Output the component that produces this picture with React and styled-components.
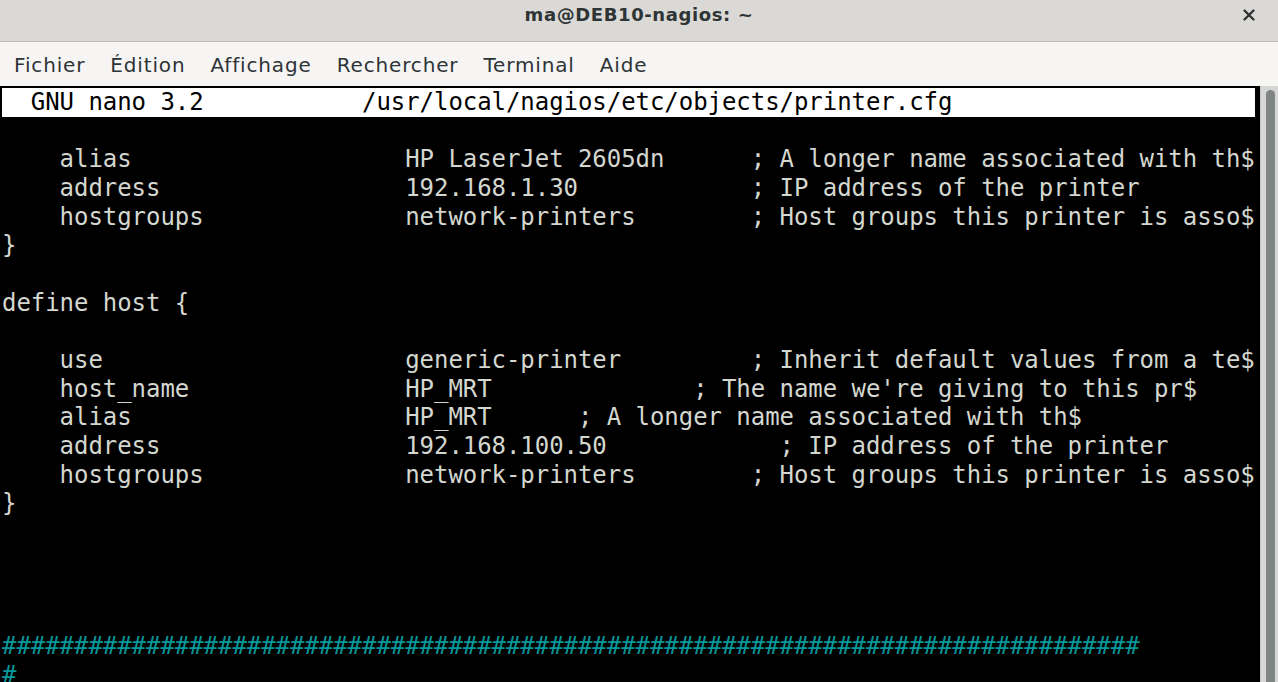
import React from 'react';
import styled, { createGlobalStyle } from 'styled-components';

const GlobalStyle = createGlobalStyle`
  html, body {
    margin: 0;
    padding: 0;
    overflow: hidden;
    background: #000;
  }
`;

const Window = styled.div`
  display: flex;
  flex-direction: column;
  width: 1278px;
  height: 682px;
  overflow: hidden;
`;

const TitleBar = styled.div`
  display: flex;
  align-items: center;
  justify-content: center;
  height: 29px;
  background: #dbd9d5;
  border-bottom: 1px solid #bdbab5;
  padding: 0 18px 12px 0;
  box-sizing: content-box;
`;

const Title = styled.div`
  flex: 1;
  text-align: center;
  padding-left: 40px;
  font-family: "DejaVu Sans", "Noto Sans", sans-serif;
  font-weight: 700;
  font-size: 18px;
  letter-spacing: 0.6px;
  color: #2e3436;
`;

const CloseButton = styled.div`
  width: 22px;
  display: flex;
  align-items: center;
  justify-content: center;
`;

const MenuBar = styled.div`
  display: flex;
  align-items: center;
  height: 44px;
  background: #f6f5f4;
  padding: 2px 0 0 14px;
  box-sizing: border-box;
  gap: 25px;
`;

const MenuItem = styled.span`
  font-family: "DejaVu Sans", "Noto Sans", sans-serif;
  font-size: 20px;
  color: #2e3436;
  letter-spacing: 0.85px;
`;

const TermArea = styled.div`
  display: flex;
  flex: 1;
  min-height: 0;
`;

const Screen = styled.div`
  flex: 1;
  background: #000;
  padding: 2px 0 0 2px;
  overflow: hidden;
`;

const Line = styled.div`
  font-family: "DejaVu Sans Mono", monospace;
  font-size: 24px;
  letter-spacing: -0.05px;
  line-height: 28.67px;
  height: 28.67px;
  white-space: pre;
  width: max-content;
  color: ${p => (p.$inverse ? '#000' : p.$cyan ? '#06989a' : '#d3d7cf')};
  background: ${p => (p.$inverse ? '#ffffff' : 'transparent')};
`;

const ScrollTrack = styled.div`
  width: 18px;
  background: #d6d6d4;
  border-left: 1px solid #c4c4c2;
  box-sizing: border-box;
  padding: 4px 3px 0 5px;
  display: flex;
`;

const ScrollThumb = styled.div`
  flex: 1;
  background: #7f8584;
  border-radius: 5px 5px 0 0;
`;

const COLS = 87;

const entry = (key, val, commentCol, comment) =>
  ('    ' + key).padEnd(28) + val.padEnd(commentCol - 28) + comment;

const lines = [
  { text: ('  GNU nano 3.2'.padEnd(25) + '/usr/local/nagios/etc/objects/printer.cfg').padEnd(COLS), inverse: true },
  { text: '' },
  { text: entry('alias', 'HP LaserJet 2605dn', 52, '; A longer name associated with th$') },
  { text: entry('address', '192.168.1.30', 52, '; IP address of the printer') },
  { text: entry('hostgroups', 'network-printers', 52, '; Host groups this printer is asso$') },
  { text: '}' },
  { text: '' },
  { text: 'define host {' },
  { text: '' },
  { text: entry('use', 'generic-printer', 52, '; Inherit default values from a te$') },
  { text: entry('host_name', 'HP_MRT', 48, "; The name we're giving to this pr$") },
  { text: entry('alias', 'HP_MRT', 40, '; A longer name associated with th$') },
  { text: entry('address', '192.168.100.50', 54, '; IP address of the printer') },
  { text: entry('hostgroups', 'network-printers', 52, '; Host groups this printer is asso$') },
  { text: '}' },
  { text: '' },
  { text: '' },
  { text: '' },
  { text: '' },
  { text: '#'.repeat(79), cyan: true },
  { text: '#', cyan: true },
];

const menus = ['Fichier', 'Édition', 'Affichage', 'Rechercher', 'Terminal', 'Aide'];

const App = () => {
  return (
    <Window>
      <GlobalStyle />
      <TitleBar>
        <Title>ma@DEB10-nagios: ~</Title>
        <CloseButton>
          <svg width="12" height="12" viewBox="0 0 12 12">
            <path d="M1.5 1.5 L10.5 10.5 M10.5 1.5 L1.5 10.5" stroke="#2e3436" strokeWidth="2.4" strokeLinecap="round" />
          </svg>
        </CloseButton>
      </TitleBar>
      <MenuBar>
        {menus.map(m => (
          <MenuItem key={m}>{m}</MenuItem>
        ))}
      </MenuBar>
      <TermArea>
        <Screen>
          {lines.map((l, i) => (
            <Line key={i} $inverse={l.inverse} $cyan={l.cyan}>
              {l.text || ' '}
            </Line>
          ))}
        </Screen>
        <ScrollTrack>
          <ScrollThumb />
        </ScrollTrack>
      </TermArea>
    </Window>
  );
};

export default App;
